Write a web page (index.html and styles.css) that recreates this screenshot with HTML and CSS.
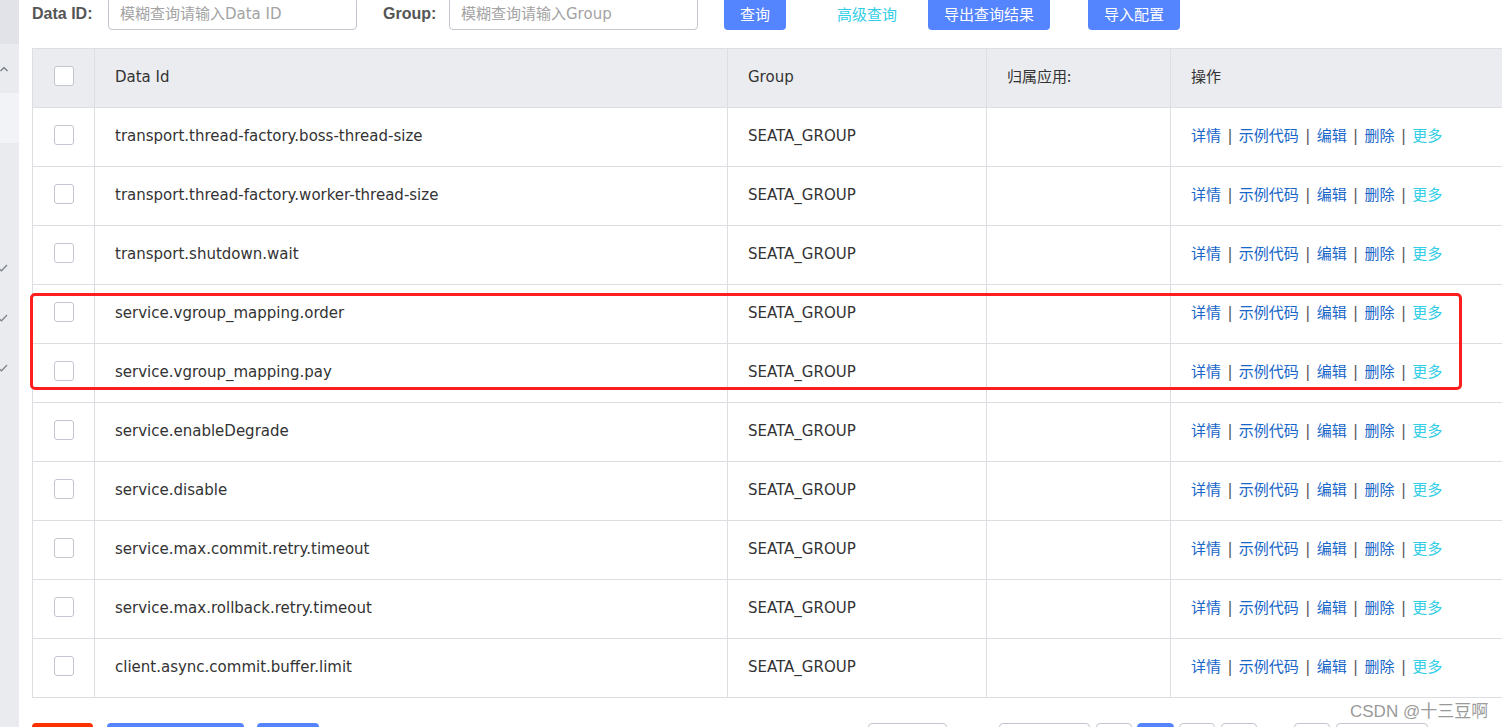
FILE: index.html
```html
<!DOCTYPE html>
<html lang="zh-CN">
<head>
<meta charset="utf-8">
<title>配置列表</title>
<link rel="stylesheet" href="styles.css">
</head>
<body>
<div class="app">
  <aside class="sidebar">
    <div class="sb-top"></div>
    <div class="sb-item sb-open"><svg class="caret" width="8" height="6" viewBox="0 0 8 6"><polyline points="0.5,5 4,1.5 7.5,5" fill="none" stroke="#6f747d" stroke-width="1.2"/></svg></div>
    <div class="sb-item sb-light"></div>
    <div class="sb-item"></div>
    <div class="sb-item"></div>
    <div class="sb-item"><svg class="check" width="8" height="8" viewBox="0 0 8 8"><polyline points="-2,4 1.5,6.8 7,1" fill="none" stroke="#7f848d" stroke-width="1.3"/></svg></div>
    <div class="sb-item"><svg class="check" width="8" height="8" viewBox="0 0 8 8"><polyline points="-2,4 1.5,6.8 7,1" fill="none" stroke="#7f848d" stroke-width="1.3"/></svg></div>
    <div class="sb-item"><svg class="check" width="8" height="8" viewBox="0 0 8 8"><polyline points="-2,4 1.5,6.8 7,1" fill="none" stroke="#7f848d" stroke-width="1.3"/></svg></div>
  </aside>

  <main class="main">
    <form class="toolbar">
      <label class="label label-data">Data ID:</label>
      <input class="field" type="text" placeholder="模糊查询请输入Data ID">
      <label class="label label-group">Group:</label>
      <input class="field" type="text" placeholder="模糊查询请输入Group">
      <button type="button" class="btn btn-primary btn-query">查询</button>
      <a class="adv-link">高级查询</a>
      <button type="button" class="btn btn-primary btn-export">导出查询结果</button>
      <button type="button" class="btn btn-primary btn-import">导入配置</button>
    </form>

    <div class="table-wrap">
      <table class="grid">
        <colgroup>
          <col class="c-check"><col class="c-id"><col class="c-group"><col class="c-app"><col class="c-op">
        </colgroup>
        <thead>
          <tr>
            <th class="cell-check"><span class="cb"></span></th>
            <th>Data Id</th>
            <th>Group</th>
            <th class="cjk">归属应用:</th>
            <th class="cjk">操作</th>
          </tr>
        </thead>
        <tbody>
          <tr><td class="cell-check"><span class="cb"></span></td><td>transport.thread-factory.boss-thread-size</td><td>SEATA_GROUP</td><td></td><td class="ops"><a class="lk">详情</a> <span class="sep">|</span> <a class="lk">示例代码</a> <span class="sep">|</span> <a class="lk">编辑</a> <span class="sep">|</span> <a class="lk">删除</a> <span class="sep">|</span> <a class="lk lk-more">更多</a></td></tr>
          <tr><td class="cell-check"><span class="cb"></span></td><td>transport.thread-factory.worker-thread-size</td><td>SEATA_GROUP</td><td></td><td class="ops"><a class="lk">详情</a> <span class="sep">|</span> <a class="lk">示例代码</a> <span class="sep">|</span> <a class="lk">编辑</a> <span class="sep">|</span> <a class="lk">删除</a> <span class="sep">|</span> <a class="lk lk-more">更多</a></td></tr>
          <tr><td class="cell-check"><span class="cb"></span></td><td>transport.shutdown.wait</td><td>SEATA_GROUP</td><td></td><td class="ops"><a class="lk">详情</a> <span class="sep">|</span> <a class="lk">示例代码</a> <span class="sep">|</span> <a class="lk">编辑</a> <span class="sep">|</span> <a class="lk">删除</a> <span class="sep">|</span> <a class="lk lk-more">更多</a></td></tr>
          <tr><td class="cell-check"><span class="cb"></span></td><td>service.vgroup_mapping.order</td><td>SEATA_GROUP</td><td></td><td class="ops"><a class="lk">详情</a> <span class="sep">|</span> <a class="lk">示例代码</a> <span class="sep">|</span> <a class="lk">编辑</a> <span class="sep">|</span> <a class="lk">删除</a> <span class="sep">|</span> <a class="lk lk-more">更多</a></td></tr>
          <tr><td class="cell-check"><span class="cb"></span></td><td>service.vgroup_mapping.pay</td><td>SEATA_GROUP</td><td></td><td class="ops"><a class="lk">详情</a> <span class="sep">|</span> <a class="lk">示例代码</a> <span class="sep">|</span> <a class="lk">编辑</a> <span class="sep">|</span> <a class="lk">删除</a> <span class="sep">|</span> <a class="lk lk-more">更多</a></td></tr>
          <tr><td class="cell-check"><span class="cb"></span></td><td>service.enableDegrade</td><td>SEATA_GROUP</td><td></td><td class="ops"><a class="lk">详情</a> <span class="sep">|</span> <a class="lk">示例代码</a> <span class="sep">|</span> <a class="lk">编辑</a> <span class="sep">|</span> <a class="lk">删除</a> <span class="sep">|</span> <a class="lk lk-more">更多</a></td></tr>
          <tr><td class="cell-check"><span class="cb"></span></td><td>service.disable</td><td>SEATA_GROUP</td><td></td><td class="ops"><a class="lk">详情</a> <span class="sep">|</span> <a class="lk">示例代码</a> <span class="sep">|</span> <a class="lk">编辑</a> <span class="sep">|</span> <a class="lk">删除</a> <span class="sep">|</span> <a class="lk lk-more">更多</a></td></tr>
          <tr><td class="cell-check"><span class="cb"></span></td><td>service.max.commit.retry.timeout</td><td>SEATA_GROUP</td><td></td><td class="ops"><a class="lk">详情</a> <span class="sep">|</span> <a class="lk">示例代码</a> <span class="sep">|</span> <a class="lk">编辑</a> <span class="sep">|</span> <a class="lk">删除</a> <span class="sep">|</span> <a class="lk lk-more">更多</a></td></tr>
          <tr><td class="cell-check"><span class="cb"></span></td><td>service.max.rollback.retry.timeout</td><td>SEATA_GROUP</td><td></td><td class="ops"><a class="lk">详情</a> <span class="sep">|</span> <a class="lk">示例代码</a> <span class="sep">|</span> <a class="lk">编辑</a> <span class="sep">|</span> <a class="lk">删除</a> <span class="sep">|</span> <a class="lk lk-more">更多</a></td></tr>
          <tr><td class="cell-check"><span class="cb"></span></td><td>client.async.commit.buffer.limit</td><td>SEATA_GROUP</td><td></td><td class="ops"><a class="lk">详情</a> <span class="sep">|</span> <a class="lk">示例代码</a> <span class="sep">|</span> <a class="lk">编辑</a> <span class="sep">|</span> <a class="lk">删除</a> <span class="sep">|</span> <a class="lk lk-more">更多</a></td></tr>
        </tbody>
      </table>
      <div class="highlight"></div>
    </div>

    <div class="footer">
      <div class="batch">
        <button type="button" class="btn btn-danger btn-del" aria-label="删除"></button>
        <button type="button" class="btn btn-primary btn-clone" aria-label="克隆"></button>
        <button type="button" class="btn btn-primary btn-sync" aria-label="同步"></button>
      </div>
      <nav class="pager">
        <span class="pg pg-size"></span>
        <span class="pg pg-prev"></span>
        <span class="pg pg-num"></span>
        <span class="pg pg-num pg-current"></span>
        <span class="pg pg-num"></span>
        <span class="pg pg-num"></span>
        <span class="pg pg-num pg-jump"></span>
        <span class="pg pg-next"></span>
      </nav>
    </div>
  </main>

  <div class="watermark">CSDN @十三豆啊</div>
</div>
</body>
</html>
```

FILE: styles.css
```css
html, body {
  margin: 0;
  padding: 0;
  height: 727px;
  overflow: hidden;
  background: #fff;
}

body {
  font-family: "DejaVu Sans", "Noto Sans CJK SC", sans-serif;
  font-size: 15px;
  color: #333;
}

.app {
  position: relative;
  display: flex;
  height: 727px;
}

/* ---------- sidebar ---------- */
.sidebar {
  flex: none;
  width: 19px;
  background: #e9ebef;
  display: flex;
  flex-direction: column;
  overflow: hidden;
}
.sb-top { height: 44px; background: #e1e3e8; }
.sb-item {
  height: 50px;
  display: flex;
  align-items: center;
  flex: none;
}
.sb-open { height: 49px; }
.sb-light { background: #f2f3f6; }
.check { display: block; }

/* ---------- main ---------- */
.main {
  flex: 1;
  min-width: 0;
  padding-left: 13px;
}

.toolbar {
  display: flex;
  align-items: center;
  height: 33px;
  margin: -3px 0 0;
}

.label {
  flex: none;
  font-family: "Liberation Sans", "Noto Sans CJK SC", sans-serif;
  font-weight: bold;
  font-size: 16px;
  color: #555;
}
.label-data { width: 76px; }
.label-group { width: 66px; margin-left: 26px; }

.field {
  flex: none;
  box-sizing: border-box;
  width: 249px;
  height: 33px;
  border: 1px solid #c4c6cf;
  border-radius: 4px;
  padding: 0 0 0 11px;
  font-family: "DejaVu Sans", "Noto Sans CJK SC", sans-serif;
  font-size: 15px;
  color: #333;
  background: #fff;
  outline: none;
}
.field::placeholder { color: #a3a3a3; }

.btn {
  flex: none;
  box-sizing: border-box;
  height: 33px;
  border: none;
  border-radius: 4px;
  padding: 0;
  font-family: "Noto Sans CJK SC", sans-serif;
  font-size: 15px;
  color: #fff;
  cursor: pointer;
}
.btn-primary { background: #5584ff; }
.btn-danger { background: #ff3000; }

.btn-query { width: 62px; margin-left: 26px; }
.btn-export { width: 122px; margin-left: 31px; }
.btn-import { width: 92px; margin-left: 38px; }

.adv-link {
  flex: none;
  width: 60px;
  margin-left: 51px;
  font-family: "Noto Sans CJK SC", sans-serif;
  font-size: 15px;
  color: #33cde5;
  cursor: pointer;
}

/* ---------- table ---------- */
.table-wrap {
  position: relative;
  margin-top: 18px;
  width: 1480px;
}

.grid {
  width: 1480px;
  table-layout: fixed;
  border-collapse: collapse;
}
.c-check { width: 62px; }
.c-id { width: 633px; }
.c-group { width: 259px; }
.c-app { width: 184px; }
.c-op { width: 342px; }

.grid th,
.grid td {
  height: 59px;
  box-sizing: border-box;
  border: 1px solid #dcdee3;
  padding: 0 0 2px 20px;
  text-align: left;
  vertical-align: middle;
  font-weight: normal;
  white-space: nowrap;
  color: #333;
}
.grid th { background: #ebecf0; }
.grid .cjk {
  font-family: "Noto Sans CJK SC", sans-serif;
  padding-bottom: 5px;
}

.grid .cell-check {
  padding: 0 0 5px 0;
  text-align: center;
}
.cb {
  display: inline-block;
  box-sizing: border-box;
  width: 20px;
  height: 20px;
  border: 1px solid #c4c6cf;
  border-radius: 3px;
  background: #fff;
  vertical-align: middle;
}

.grid .ops {
  font-family: "DejaVu Sans", "Noto Sans CJK SC", sans-serif;
  padding-bottom: 5px;
}
.lk {
  font-family: "Noto Sans CJK SC", sans-serif;
  color: #1766c8;
  cursor: pointer;
}
.lk-more { color: #33cde5; }
.sep { color: #555; padding: 0 1.6px; }

.highlight {
  position: absolute;
  left: -2px;
  top: 245px;
  width: 1432px;
  height: 97px;
  box-sizing: border-box;
  border: 3px solid #ff1e1e;
  border-radius: 5px;
  pointer-events: none;
}

/* ---------- footer ---------- */
.footer {
  display: flex;
  align-items: flex-start;
  margin-top: 25px;
}
.batch { display: flex; }
.btn-del { width: 61px; height: 30px; }
.btn-clone { width: 137px; height: 30px; margin-left: 14px; }
.btn-sync { width: 62px; height: 30px; margin-left: 13px; }

.pager {
  display: flex;
  margin-left: 549px;
}
.pg {
  box-sizing: border-box;
  height: 30px;
  width: 36px;
  border: 1px solid #c4c6cf;
  border-radius: 4px;
  background: #fff;
  margin-left: 6px;
}
.pg-size { width: 79px; margin-left: 0; }
.pg-prev { width: 91px; margin-left: 52px; }
.pg-current { background: #5584ff; border-color: #5584ff; width: 37px; margin-left: 5px; }
.pg-current + .pg { margin-left: 5px; }
.pg-jump { margin-left: 37px; }
.pg-next { width: 92px; }

.watermark {
  position: absolute;
  left: 1350px;
  top: 697px;
  font-family: "Liberation Sans", "Noto Sans CJK SC", sans-serif;
  font-size: 17px;
  color: #9a9a9a;
  white-space: nowrap;
  text-shadow: 0 0 2px #fff;
}
```
